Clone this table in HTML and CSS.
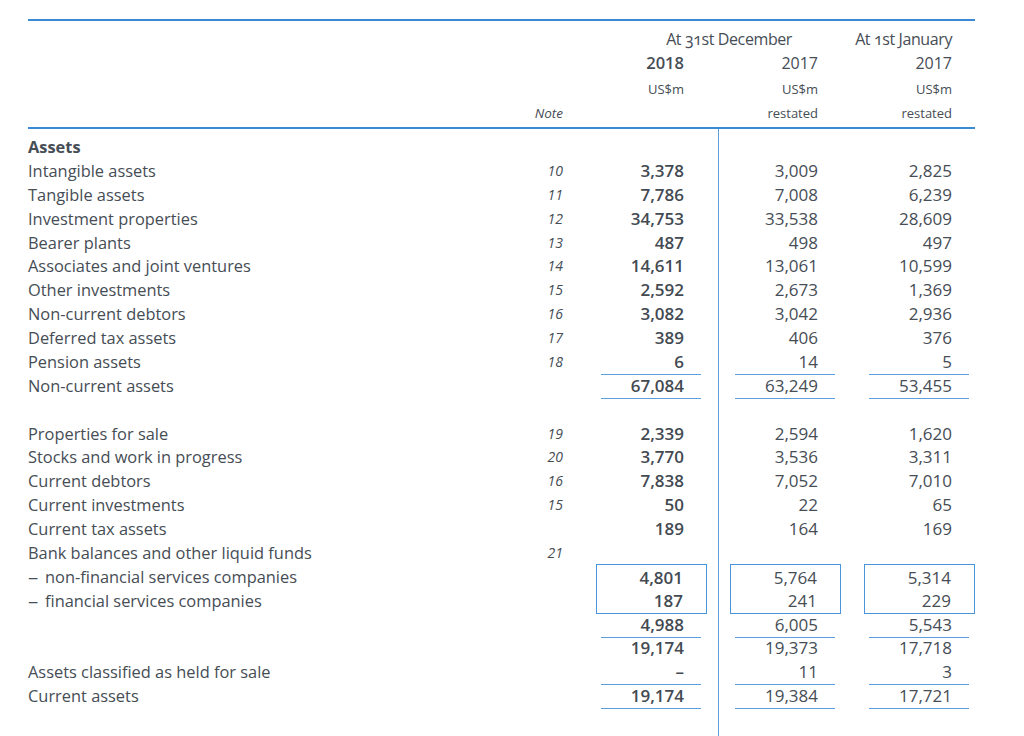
FILE: index.html
```html
<!DOCTYPE html>
<html lang="en">
<head>
<meta charset="utf-8">
<title>Balance sheet – Assets</title>
<link rel="stylesheet" href="styles.css">
</head>
<body>
<div class="sheet">
  <div class="head">
    <div class="row hr1">
      <div></div><div></div>
      <div class="period span2">At 31st December</div>
      <div class="period c3">At 1st January</div>
    </div>
    <div class="row hr2">
      <div></div><div></div>
      <div class="hv bold">2018</div>
      <div class="hv">2017</div>
      <div class="hv">2017</div>
    </div>
    <div class="row hr3 small">
      <div></div><div></div>
      <div class="hv">US$m</div>
      <div class="hv">US$m</div>
      <div class="hv">US$m</div>
    </div>
    <div class="row hr4 small">
      <div></div>
      <div class="note">Note</div>
      <div class="hv"></div>
      <div class="hv">restated</div>
      <div class="hv">restated</div>
    </div>
  </div>

  <div class="body">
    <div class="row"><div class="label bold">Assets</div><div class="note"></div><div class="v"><div class="n"></div></div><div class="v"><div class="n"></div></div><div class="v"><div class="n"></div></div></div>
    <div class="row"><div class="label">Intangible assets</div><div class="note">10</div><div class="v cy"><div class="n">3,378</div></div><div class="v"><div class="n">3,009</div></div><div class="v"><div class="n">2,825</div></div></div>
    <div class="row"><div class="label">Tangible assets</div><div class="note">11</div><div class="v cy"><div class="n">7,786</div></div><div class="v"><div class="n">7,008</div></div><div class="v"><div class="n">6,239</div></div></div>
    <div class="row"><div class="label">Investment properties</div><div class="note">12</div><div class="v cy"><div class="n">34,753</div></div><div class="v"><div class="n">33,538</div></div><div class="v"><div class="n">28,609</div></div></div>
    <div class="row"><div class="label">Bearer plants</div><div class="note">13</div><div class="v cy"><div class="n">487</div></div><div class="v"><div class="n">498</div></div><div class="v"><div class="n">497</div></div></div>
    <div class="row"><div class="label">Associates and joint ventures</div><div class="note">14</div><div class="v cy"><div class="n">14,611</div></div><div class="v"><div class="n">13,061</div></div><div class="v"><div class="n">10,599</div></div></div>
    <div class="row"><div class="label">Other investments</div><div class="note">15</div><div class="v cy"><div class="n">2,592</div></div><div class="v"><div class="n">2,673</div></div><div class="v"><div class="n">1,369</div></div></div>
    <div class="row"><div class="label">Non-current debtors</div><div class="note">16</div><div class="v cy"><div class="n">3,082</div></div><div class="v"><div class="n">3,042</div></div><div class="v"><div class="n">2,936</div></div></div>
    <div class="row"><div class="label">Deferred tax assets</div><div class="note">17</div><div class="v cy"><div class="n">389</div></div><div class="v"><div class="n">406</div></div><div class="v"><div class="n">376</div></div></div>
    <div class="row"><div class="label">Pension assets</div><div class="note">18</div><div class="v cy"><div class="n ul">6</div></div><div class="v"><div class="n ul">14</div></div><div class="v"><div class="n ul">5</div></div></div>
    <div class="row"><div class="label">Non-current assets</div><div class="note"></div><div class="v cy"><div class="n ul">67,084</div></div><div class="v"><div class="n ul">63,249</div></div><div class="v"><div class="n ul">53,455</div></div></div>
    <div class="row"><div class="label"></div><div class="note"></div><div class="v"></div><div class="v"></div><div class="v"></div></div>
    <div class="row"><div class="label">Properties for sale</div><div class="note">19</div><div class="v cy"><div class="n">2,339</div></div><div class="v"><div class="n">2,594</div></div><div class="v"><div class="n">1,620</div></div></div>
    <div class="row"><div class="label">Stocks and work in progress</div><div class="note">20</div><div class="v cy"><div class="n">3,770</div></div><div class="v"><div class="n">3,536</div></div><div class="v"><div class="n">3,311</div></div></div>
    <div class="row"><div class="label">Current debtors</div><div class="note">16</div><div class="v cy"><div class="n">7,838</div></div><div class="v"><div class="n">7,052</div></div><div class="v"><div class="n">7,010</div></div></div>
    <div class="row"><div class="label">Current investments</div><div class="note">15</div><div class="v cy"><div class="n">50</div></div><div class="v"><div class="n">22</div></div><div class="v"><div class="n">65</div></div></div>
    <div class="row"><div class="label">Current tax assets</div><div class="note"></div><div class="v cy"><div class="n">189</div></div><div class="v"><div class="n">164</div></div><div class="v"><div class="n">169</div></div></div>
    <div class="row"><div class="label">Bank balances and other liquid funds</div><div class="note">21</div><div class="v"></div><div class="v"></div><div class="v"></div></div>
    <div class="row"><div class="label"><span class="dash">–</span>non-financial services companies</div><div class="note"></div><div class="v cy"><div class="n box box-top">4,801</div></div><div class="v"><div class="n box box-top">5,764</div></div><div class="v"><div class="n box box-top">5,314</div></div></div>
    <div class="row"><div class="label"><span class="dash">–</span>financial services companies</div><div class="note"></div><div class="v cy"><div class="n box box-bottom">187</div></div><div class="v"><div class="n box box-bottom">241</div></div><div class="v"><div class="n box box-bottom">229</div></div></div>
    <div class="row"><div class="label"></div><div class="note"></div><div class="v cy"><div class="n ul">4,988</div></div><div class="v"><div class="n ul">6,005</div></div><div class="v"><div class="n ul">5,543</div></div></div>
    <div class="row"><div class="label"></div><div class="note"></div><div class="v cy"><div class="n">19,174</div></div><div class="v"><div class="n">19,373</div></div><div class="v"><div class="n">17,718</div></div></div>
    <div class="row"><div class="label">Assets classified as held for sale</div><div class="note"></div><div class="v cy"><div class="n ul">–</div></div><div class="v"><div class="n ul">11</div></div><div class="v"><div class="n ul">3</div></div></div>
    <div class="row"><div class="label">Current assets</div><div class="note"></div><div class="v cy"><div class="n ul">19,174</div></div><div class="v"><div class="n ul">19,384</div></div><div class="v"><div class="n ul">17,721</div></div></div>
  </div>
</div>
</body>
</html>
```

FILE: styles.css
```css
html, body {
  margin: 0;
  padding: 0;
  background: #ffffff;
}

body {
  font-family: "Open Sans", "Noto Sans", "Liberation Sans", sans-serif;
  color: #464d55;
  font-size: 16px;
}

.sheet {
  width: 947px;
  margin: 19px 0 0 28px;
  border-top: 2px solid #3a89d5;
}

.row {
  display: grid;
  grid-template-columns: 1fr 45px 134px 134px 134px;
}

.head {
  padding: 6px 0 2px;
  border-bottom: 2px solid #3a89d5;
}

.head .row {
  height: 24px;
  line-height: 24px;
}

.head .hr3 {
  margin-top: 2px;
}

.period {
  text-align: right;
  font-variant-numeric: oldstyle-nums;
  letter-spacing: -0.4px;
}

.period.span2 {
  grid-column: span 2;
  padding-right: 49px;
}

.period.c3 {
  padding-right: 23px;
}

.hv {
  text-align: right;
  padding-right: 23px;
}

.small {
  font-size: 13px;
}

.bold {
  font-weight: 700;
}

.hr2 .bold {
  font-weight: 600;
  font-size: 16.5px;
}

.note {
  text-align: right;
  padding-right: 10px;
  font-style: italic;
  font-size: 14px;
}

.head .note {
  font-size: 13.5px;
}

.body {
  padding: 5px 0 40px;
  background-image: linear-gradient(#5c9ddb, #5c9ddb);
  background-size: 1px 100%;
  background-position: 690px 0;
  background-repeat: no-repeat;
}

.body .row {
  height: 23.875px;
  line-height: 25px;
}

.body .label {
  font-size: 16.4px;
  white-space: nowrap;
}

.dash {
  display: inline-block;
  width: 17px;
  transform: scaleX(1.25);
  transform-origin: left center;
}

.v {
  height: 100%;
}

.n {
  box-sizing: border-box;
  height: 100%;
  margin: 0 6px 0 28px;
  padding-right: 17px;
  text-align: right;
  font-size: 17px;
}

.cy .n {
  font-weight: 600;
  color: #434a52;
}

.n.ul {
  border-bottom: 1px solid #5c9ddb;
}

.n.box {
  margin: 0 0 0 23px;
  padding-right: 23px;
  border-left: 1px solid #4a94da;
  border-right: 1px solid #4a94da;
}

.n.box-top {
  border-top: 1px solid #4a94da;
  line-height: 23px;
  padding-top: 1px;
}

.n.box-bottom {
  border-bottom: 1px solid #4a94da;
}
```
